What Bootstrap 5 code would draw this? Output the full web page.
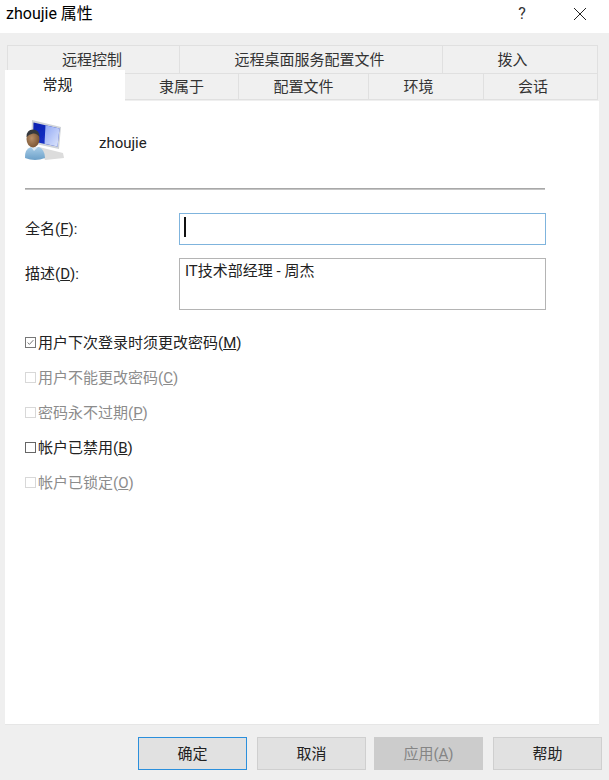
<!DOCTYPE html>
<html lang="zh">
<head>
<meta charset="utf-8">
<title>zhoujie 属性</title>
<link rel="stylesheet" href="https://cdn.jsdelivr.net/npm/bootstrap@5.3.0/dist/css/bootstrap.min.css">
<style>
html,body{height:780px;overflow:hidden}
body{font-family:Roboto,"Noto Sans CJK SC",sans-serif;font-size:15px;line-height:20px;color:#222;background:#efefef}
.dlg{width:609px;height:780px}
.titlebar{height:33px;background:#fff;color:#000;padding:0 0 6px 6px;font-size:16px}
.tb-help{width:14px;margin-left:auto;margin-right:45px;text-align:center;font-size:16px;color:#333}
.tb-close{margin:1px 23px 0 0;width:12px;height:12px;display:block}
.tabarea{padding:12px 0 0 7px;height:68px}
.tabrow{display:flex;width:591px;height:28px}
.tabrow.lower{height:27px;margin-left:-2px;width:593px}
.tabx{border:1px solid #e0e0e0;border-bottom:0;border-left-width:0;text-align:center;line-height:29px;color:#333;background:#f0f0f0;white-space:nowrap}
.tabrow .tabx:first-child{border-left-width:1px}
.tabrow.lower .tabx{border-bottom:1px solid #e0e0e0;line-height:27px}
.tabrow .tabx.shifted{padding-right:15px}
.tabrow .tabx.nudged{padding-right:3px}
.tabrow.lower .tabx.tabactive{background:#fff;border:0;width:120px;height:31px;margin-top:-3px;line-height:30px;padding-right:15px;position:relative;color:#222}
.panel{margin:0 10px 0 5px;height:624px;background:#fff;padding:19px 54px 0 20px;border-bottom:1px solid #e6e6e6}
.uname{height:41px}
.uicon{width:40px;height:41px;flex:none}
.uname span{margin-left:34px;line-height:20px;margin-top:4px}
.rule{height:2px;background:#c4c4c4;margin:27px 0 23px;border-top:1px solid #a8a8a8;width:520px}
.fieldrow{display:flex;width:521px}
.fieldrow.first{margin-bottom:13px}
.fieldrow label{width:154px;flex:none;padding-top:6px;margin:0}
.edit.form-control{border-radius:0;border:1px solid #b4b4b4;font-size:15px;line-height:20px;color:#222;padding:2px 5px;width:367px;box-shadow:none;font-family:inherit;resize:none;background:#fff;min-height:0}
.edit.editname{height:32px;border-color:#7fb4dd}
.edit.editdesc{height:52px}
.caretbar{position:absolute;left:5px;top:4px;width:2px;height:20px;background:#111}
.checks{margin-top:15px}
.chk{height:35px;align-items:center;display:flex}
.chk input.form-check-input{width:11px;height:11px;margin:0 2px 0 0;border:1px solid #666;border-radius:0;flex:none;background-color:#fff;box-shadow:none;opacity:1;float:none}
.chk input.form-check-input:checked{background-color:#fff;border-color:#777;background-image:url("data:image/svg+xml,%3Csvg xmlns='http://www.w3.org/2000/svg' viewBox='0 0 11 11'%3E%3Cpath d='M2 5.5l2.2 2.3L9 2.6' fill='none' stroke='%23666' stroke-width='1.1'/%3E%3C/svg%3E");background-size:100% 100%}
.chk.off{color:#8c8c8c}
.chk.off input.form-check-input{border-color:#d8d8d8}
.chk.off label{opacity:1;color:#8c8c8c}
.chk label{margin:0}
.actions{padding:12px 7px 0 0;gap:10px}
.actions .btn{width:109px;height:33px;border-radius:0;background:#e1e1e1;border:1px solid #cfcfcf;color:#222;font-size:15px;padding:0;line-height:33px;opacity:1}
.actions .btn.is-def{border-color:#2b8fdc;box-shadow:none}
.actions .btn.is-cancel{margin-right:-2px}
.actions .btn:disabled{background:#ccc;border-color:#ccc;color:#858585}
</style>
</head>
<body>
<div class="dlg d-flex flex-column">
  <div class="titlebar d-flex align-items-center">
    <span>zhoujie 属性</span>
    <span class="tb-help">?</span>
    <svg class="tb-close" viewBox="0 0 12 12"><path d="M0 0L12 12M12 0L0 12" stroke="#222" stroke-width="1" fill="none"/></svg>
  </div>
  <div class="tabarea">
    <div class="tabrow">
      <div class="tabx nudged" style="width:173px">远程控制</div>
      <div class="tabx nudged" style="width:263px">远程桌面服务配置文件</div>
      <div class="tabx shifted" style="width:155px">拨入</div>
    </div>
    <div class="tabrow lower">
      <div class="tabx tabactive">常规</div>
      <div class="tabx" style="width:114px">隶属于</div>
      <div class="tabx" style="width:130px">配置文件</div>
      <div class="tabx shifted" style="width:115px">环境</div>
      <div class="tabx shifted" style="width:114px">会话</div>
    </div>
  </div>
  <div class="panel">
    <div class="uname d-flex align-items-center">
      <svg class="uicon" viewBox="0 0 40 41">
        <defs>
          <linearGradient id="scr" x1="0" y1="0" x2="1" y2="1"><stop offset="0" stop-color="#0a1fb0"/><stop offset="1" stop-color="#1a3ad0"/></linearGradient>
          <linearGradient id="gls" x1="0" y1="0" x2="1" y2="1"><stop offset="0" stop-color="#8ea6f4"/><stop offset="1" stop-color="#dfe7fc"/></linearGradient>
          <linearGradient id="shirt" x1="0" y1="0" x2="0" y2="1"><stop offset="0" stop-color="#a8cde8"/><stop offset="1" stop-color="#6ca0c8"/></linearGradient>
          <radialGradient id="skin" cx=".4" cy=".45" r=".7"><stop offset="0" stop-color="#b88e68"/><stop offset="1" stop-color="#6e4a2a"/></radialGradient>
          <filter id="sft" x="-10%" y="-10%" width="120%" height="120%"><feGaussianBlur stdDeviation=".4"/></filter>
        </defs>
        <g filter="url(#sft)">
          <path d="M14 27L38 33L39 38L20 40Z" fill="#dcdcdc"/>
          <path d="M7 0L36 7L34 29L6 23Z" fill="#cfd3d8"/>
          <path d="M8.500 2.500L34.500 8.500L32.500 26.500L8 21.500Z" fill="url(#scr)"/>
          <path d="M20.500 5.300L34.500 8.500L32.500 26.500L19.500 23.800Z" fill="url(#gls)"/>
          <path d="M0 38Q-.5 29 6 27L14 27Q20 30 20 38Q10 42 0 38Z" fill="url(#shirt)"/>
          <path d="M6 27L9 31L13 27Z" fill="#dbe8f2"/>
          <ellipse cx="8" cy="19" rx="6.500" ry="8.500" fill="url(#skin)"/>
          <path d="M1.500 17Q1.500 9.500 8 9.500Q14.500 9.500 14.500 17Q12 13 8 13.500Q4 14 1.500 17Z" fill="#34393e"/>
        </g>
      </svg>
      <span>zhoujie</span>
    </div>
    <div class="rule"></div>
    <div class="fieldrow first">
      <label for="fullname">全名(<u>F</u>):</label>
      <div class="position-relative">
        <input id="fullname" class="form-control edit editname" type="text">
        <span class="caretbar"></span>
      </div>
    </div>
    <div class="fieldrow">
      <label for="desc">描述(<u>D</u>):</label>
      <textarea id="desc" class="form-control edit editdesc">IT技术部经理 - 周杰</textarea>
    </div>
    <div class="checks">
      <div class="chk"><input class="form-check-input" type="checkbox" id="c1" checked><label for="c1">用户下次登录时须更改密码(<u>M</u>)</label></div>
      <div class="chk off"><input class="form-check-input" type="checkbox" id="c2" disabled><label for="c2">用户不能更改密码(<u>C</u>)</label></div>
      <div class="chk off"><input class="form-check-input" type="checkbox" id="c3" disabled><label for="c3">密码永不过期(<u>P</u>)</label></div>
      <div class="chk"><input class="form-check-input" type="checkbox" id="c4"><label for="c4">帐户已禁用(<u>B</u>)</label></div>
      <div class="chk off"><input class="form-check-input" type="checkbox" id="c5" disabled><label for="c5">帐户已锁定(<u>O</u>)</label></div>
    </div>
  </div>
  <div class="actions d-flex justify-content-end">
    <button class="btn is-def" type="button">确定</button>
    <button class="btn is-cancel" type="button">取消</button>
    <button class="btn" type="button" disabled>应用(<u>A</u>)</button>
    <button class="btn" type="button">帮助</button>
  </div>
</div>
</body>
</html>
